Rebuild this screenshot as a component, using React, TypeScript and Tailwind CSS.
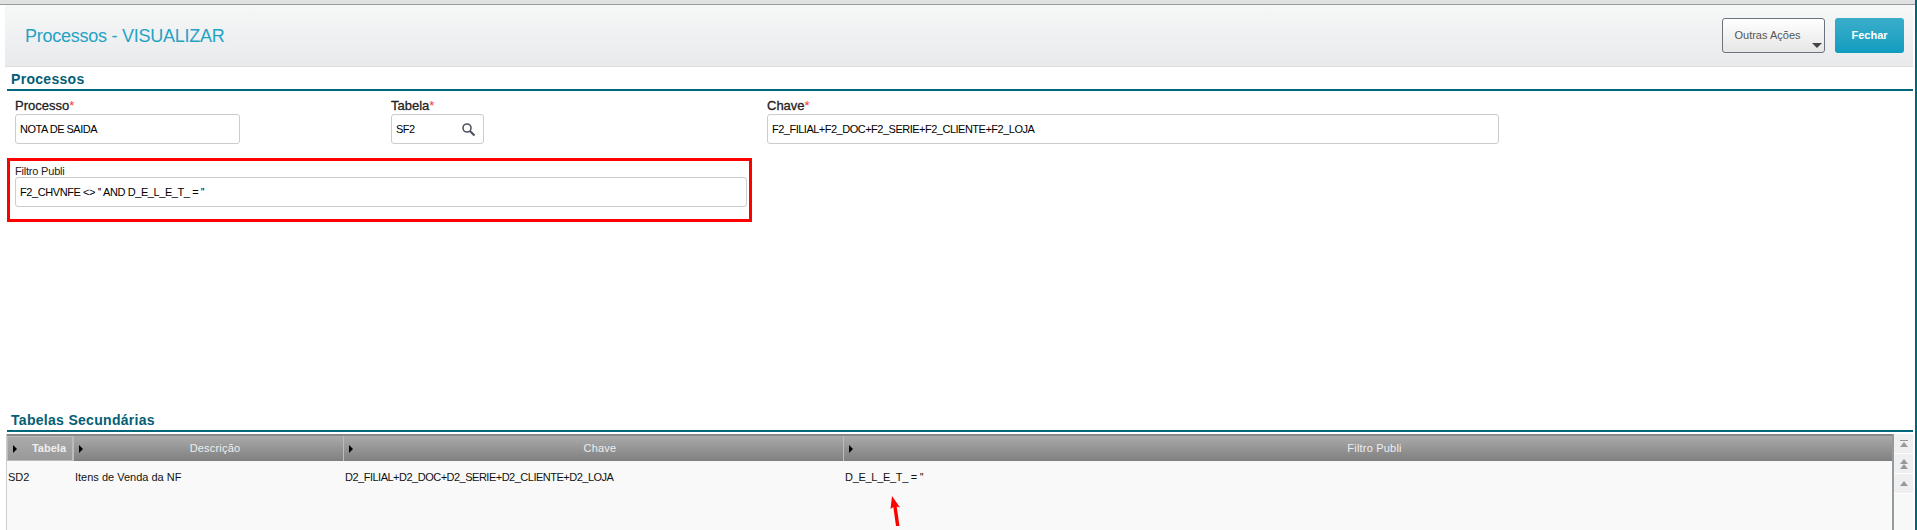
import React from "react";

function Field({ label, value, required, className, children }: { label: string; value: string; required?: boolean; className: string; children?: React.ReactNode }) {
  return (
    <div className={className}>
      <div className="h-[17px] text-[13px] leading-[17px] text-[#222] [-webkit-text-stroke:0.3px_#222]">
        {label}
        {required && <span className="text-[#f33] [-webkit-text-stroke:0px]">*</span>}
      </div>
      <div className="flex h-[30px] items-center justify-between rounded-[3px] border border-[#ccc] bg-white pl-[4px] pr-[6px] text-[11px] tracking-[-0.5px] text-black">
        <span>{value}</span>
        {children}
      </div>
    </div>
  );
}

function SectionTitle({ children }: { children: React.ReactNode }) {
  return (
    <div className="ml-[2px] border-b-[2px] border-[#00667c] pl-[4px] text-[14px] font-bold leading-[19px] tracking-[0.3px] text-[#035e75]">
      {children}
    </div>
  );
}

function Caret() {
  return <span className="ml-[5px] h-0 w-0 border-y-[4px] border-l-[4px] border-y-transparent border-l-black" />;
}

function HeaderCell({ label, className }: { label: string; className: string }) {
  return (
    <div className={`flex items-center border-l border-[#bbb] ${className}`}>
      <Caret />
      <span className="flex-1 pl-[4px] text-center text-[11px] tracking-[0.2px] text-[#eee]">{label}</span>
    </div>
  );
}

function ScrollButton({ double, bar }: { double?: boolean; bar?: boolean }) {
  return (
    <div className="flex h-[20px] flex-col items-center justify-center border-b border-white bg-[#eeeff1]">
      {bar && <div className="mb-[1px] h-px w-[8px] bg-[#999]" />}
      <div className="h-0 w-0 border-x-[4px] border-b-[5px] border-x-transparent border-b-[#999]" />
      {double && <div className="h-0 w-0 border-x-[4px] border-b-[5px] border-x-transparent border-b-[#999]" />}
    </div>
  );
}

export default function App() {
  return (
    <div className="relative flex h-[530px] w-[1917px] flex-col overflow-hidden bg-white font-['Liberation_Sans',sans-serif]">
      <div className="h-[5px] border-b border-[#999] bg-[#dfe1e3]" />
      <div className="flex min-h-0 flex-1 pl-[5px] pr-[2px]">
        <div className="flex min-w-0 flex-1 flex-col">
          <header className="flex h-[62px] items-center justify-between border-b border-[#ddd] bg-gradient-to-b from-[#f6f7f7] to-[#e9eaec] pl-[20px] pr-[9px]">
            <h1 className="text-[18px] leading-[24px] tracking-[-0.25px] text-[#23a3c4]">Processos - VISUALIZAR</h1>
            <div className="flex items-center gap-[10px]">
              <button className="relative h-[35px] w-[103px] rounded-[3px] border border-[#6e7280] bg-gradient-to-b from-white to-[#e6e6e6] pr-[12px] text-[11px] text-[#555]">
                Outras Ações
                <span className="absolute bottom-[4px] right-[2px] h-0 w-0 border-x-[5px] border-t-[5px] border-x-transparent border-t-[#444]" />
              </button>
              <button className="h-[35px] w-[69px] rounded-[3px] bg-gradient-to-b from-[#38aecb] to-[#0f9cbf] text-[11px] font-bold text-white">
                Fechar
              </button>
            </div>
          </header>
          <div className="mt-[3px]">
            <SectionTitle>Processos</SectionTitle>
          </div>
          <div className="mt-[6px] flex pl-[10px]">
            <Field label="Processo" value="NOTA DE SAIDA" required className="w-[225px]" />
            <Field label="Tabela" value="SF2" required className="ml-[151px] w-[93px]">
              <svg width="15" height="15" viewBox="0 0 15 15" fill="none" className="mr-[1px]">
                <circle cx="6" cy="6" r="4" stroke="#4d5560" strokeWidth="1.6" />
                <path d="M9 9l4.5 4.5" stroke="#4d5560" strokeWidth="2.2" />
              </svg>
            </Field>
            <Field label="Chave" value="F2_FILIAL+F2_DOC+F2_SERIE+F2_CLIENTE+F2_LOJA" required className="ml-[283px] w-[732px]" />
          </div>
          <div className="ml-[2px] mt-[14px] h-[64px] w-[745px] border-[3px] border-[#f00] pl-[5px] pr-[2px] pt-[3px]">
            <div className="h-[13px] text-[11px] leading-[15px] tracking-[-0.2px] text-[#222]">Filtro Publi</div>
            <div className="flex h-[30px] items-center rounded-[3px] border border-[#ccc] bg-white pl-[4px] text-[11px] tracking-[-0.42px] text-black">
              {"F2_CHVNFE <> '' AND D_E_L_E_T_ = ''"}
            </div>
          </div>
          <div className="mt-[auto]">
            <SectionTitle>Tabelas Secundárias</SectionTitle>
          </div>
          <div className="mt-[2px] flex h-[96px] min-h-0 pl-[1px]">
            <div className="flex min-w-0 flex-1 flex-col border-l border-r-[2px] border-l-[#ccc] border-r-[#999] bg-[#f9f9f9]">
              <div className="flex h-[27px] border-t-[2px] border-[#888] bg-gradient-to-b from-[#aaa] to-[#808080]">
                <div className="flex w-[66px] items-center border border-[#bbb] bg-gradient-to-b from-[#aaa] to-[#999]">
                  <Caret />
                  <span className="flex-1 text-right pr-[6px] text-[11px] font-bold text-[#eee]">Tabela</span>
                </div>
                <HeaderCell label="Descrição" className="w-[270px]" />
                <HeaderCell label="Chave" className="w-[500px]" />
                <HeaderCell label="Filtro Publi" className="flex-1" />
              </div>
              <div className="flex pt-[9px] text-[11px] leading-[14px] text-[#111]">
                <div className="w-[66px] pl-[1px]">SD2</div>
                <div className="w-[270px] pl-[2px]">Itens de Venda da NF</div>
                <div className="w-[500px] pl-[2px] tracking-[-0.5px]">D2_FILIAL+D2_DOC+D2_SERIE+D2_CLIENTE+D2_LOJA</div>
                <div className="flex-1 pl-[2px] tracking-[-0.3px]">{"D_E_L_E_T_ = ''"}</div>
              </div>
            </div>
            <div className="w-[19px] bg-[#f7f8f8]">
              <ScrollButton bar />
              <ScrollButton double />
              <ScrollButton />
            </div>
          </div>
        </div>
        <div className="ml-px w-px" />
      </div>
      <div className="absolute right-0 top-0 h-full w-[2px] bg-[#00667c]" />
      <svg className="absolute left-[888px] top-[494px]" width="14" height="34" viewBox="0 0 14 34">
        <path d="M4 2L12 13.5L8.7 12.5L11.5 32L8 32L5.3 13L2.5 15Z" fill="#f00" />
      </svg>
    </div>
  );
}
